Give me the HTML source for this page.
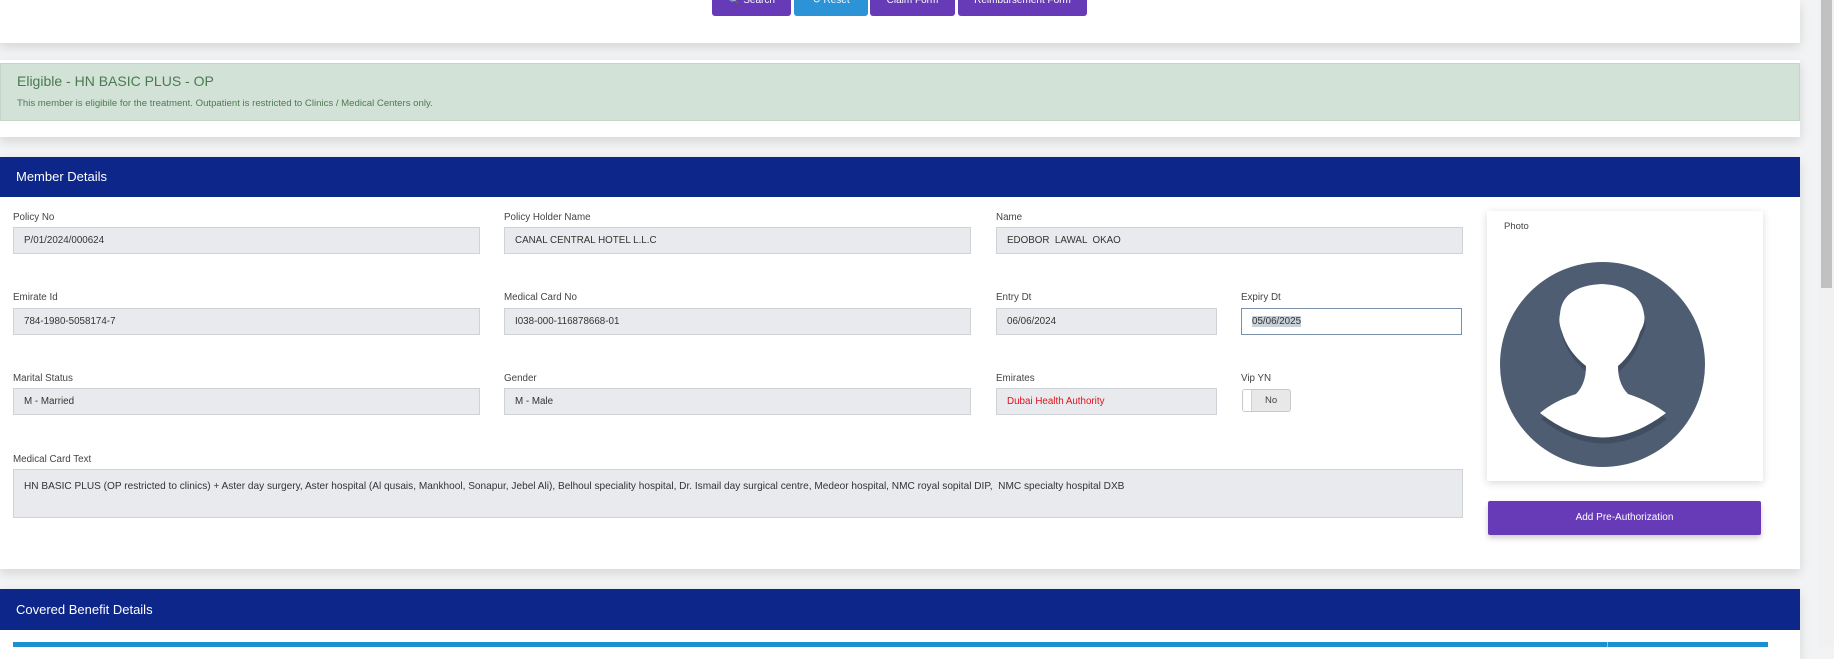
<!DOCTYPE html>
<html><head><meta charset="utf-8">
<style>
*{margin:0;padding:0;box-sizing:border-box}
body{width:1834px;height:647px;overflow:hidden;background:#f2f3f4;font-family:"Liberation Sans",Arial,sans-serif;position:relative}
.abs{position:absolute}
.panel{position:absolute;left:0;width:1800px;background:#fff;box-shadow:0 4px 10px rgba(0,0,0,.12)}
.btn{position:absolute;top:-6px;height:22px;border-radius:0 0 3px 3px;color:#fff;font-size:10px;text-align:center;line-height:14px}
.lbl{position:absolute;font-size:9.8px;color:#444}
.inp{position:absolute;height:27px;background:#e8eaed;border:1px solid #cfd3d8;font-size:9.8px;color:#333;padding-left:10px;line-height:25px}
.hdr{position:absolute;left:0;width:1800px;background:#0d2689;color:#fff;font-size:13px;padding-left:16px}
</style></head><body>
<div class="panel" style="top:0;height:43px"></div>
<div class="btn" style="left:712px;width:79px;background:#673ab7">&#128269; Search</div>
<div class="btn" style="left:794px;width:74px;background:#2b93d6">&#x21bb; Reset</div>
<div class="btn" style="left:870px;width:85px;background:#673ab7">Claim Form</div>
<div class="btn" style="left:958px;width:129px;background:#673ab7">Reimbursement Form</div>

<div class="panel" style="top:60px;height:77px"></div>
<div class="abs" style="left:0;top:63px;width:1800px;height:58px;background:#d3e2d7;border:1px solid #c4d6c8"></div>
<div class="abs" style="left:17px;top:73px;font-size:14px;color:#4a7a50">Eligible - HN BASIC PLUS - OP</div>
<div class="abs" style="left:17px;top:98px;font-size:9.6px;color:#4f7a55">This member is eligibile for the treatment. Outpatient is restricted to Clinics / Medical Centers only.</div>

<div class="panel" style="top:157px;height:412px"></div>
<div class="hdr" style="top:157px;height:40px;line-height:40px">Member Details</div>

<div class="lbl" style="left:13px;top:212px">Policy No</div>
<div class="inp" style="left:13px;top:227px;width:467px">P/01/2024/000624</div>
<div class="lbl" style="left:504px;top:212px">Policy Holder Name</div>
<div class="inp" style="left:504px;top:227px;width:467px">CANAL CENTRAL HOTEL L.L.C</div>
<div class="lbl" style="left:996px;top:212px">Name</div>
<div class="inp" style="left:996px;top:227px;width:467px">EDOBOR &nbsp;LAWAL &nbsp;OKAO</div>

<div class="lbl" style="left:13px;top:292px">Emirate Id</div>
<div class="inp" style="left:13px;top:308px;width:467px">784-1980-5058174-7</div>
<div class="lbl" style="left:504px;top:292px">Medical Card No</div>
<div class="inp" style="left:504px;top:308px;width:467px">I038-000-116878668-01</div>
<div class="lbl" style="left:996px;top:292px">Entry Dt</div>
<div class="inp" style="left:996px;top:308px;width:221px">06/06/2024</div>
<div class="lbl" style="left:1241px;top:292px">Expiry Dt</div>
<div class="inp" style="left:1241px;top:308px;width:221px;background:#fff;border-color:#7a8fa8"><span style="background:#c8d0d8">05/06/2025</span></div>

<div class="lbl" style="left:13px;top:373px">Marital Status</div>
<div class="inp" style="left:13px;top:388px;width:467px">M - Married</div>
<div class="lbl" style="left:504px;top:373px">Gender</div>
<div class="inp" style="left:504px;top:388px;width:467px">M - Male</div>
<div class="lbl" style="left:996px;top:373px">Emirates</div>
<div class="inp" style="left:996px;top:388px;width:221px;color:#e0101a">Dubai Health Authority</div>
<div class="lbl" style="left:1241px;top:373px">Vip YN</div>
<div class="abs" style="left:1242px;top:389px;width:49px;height:23px;border:1px solid #c9c9c9;border-radius:3px;background:#e8e8e8;overflow:hidden"><div style="width:9px;height:100%;background:#fff;border-right:1px solid #d0d0d0"></div><div class="abs" style="left:22px;top:5px;font-size:9.5px;color:#444">No</div></div>

<div class="lbl" style="left:13px;top:454px">Medical Card Text</div>
<div class="inp" style="left:13px;top:469px;width:1450px;height:49px;line-height:14px;padding-top:10px;font-size:10.1px">HN BASIC PLUS (OP restricted to clinics) + Aster day surgery, Aster hospital (Al qusais, Mankhool, Sonapur, Jebel Ali), Belhoul speciality hospital, Dr. Ismail day surgical centre, Medeor hospital, NMC royal sopital DIP, &nbsp;NMC specialty hospital DXB</div>

<div class="abs" style="left:1487px;top:211px;width:276px;height:270px;background:#fff;box-shadow:0 2px 8px rgba(0,0,0,.15)"></div>
<div class="abs" style="left:1504px;top:221px;font-size:9.5px;color:#444">Photo</div>
<svg class="abs" style="left:1500px;top:262px" width="205" height="205" viewBox="0 0 205 205">
<circle cx="102.5" cy="102.5" r="102.5" fill="#4f5d72"/>
<path d="M40 151 Q102 200 166 151 Q150 139 128 132 Q118 122 118 104 Q134 90 140 70 Q146 60 144 52 Q140 24 102 22 Q62 24 60 52 Q58 60 62 70 Q68 90 86 104 Q86 122 76 132 Q54 139 40 151Z" fill="#414d61" transform="translate(1,6)"/>
<path d="M40 151 Q102 200 166 151 Q150 139 128 132 Q118 122 118 104 Q134 90 140 70 Q146 60 144 52 Q140 24 102 22 Q62 24 60 52 Q58 60 62 70 Q68 90 86 104 Q86 122 76 132 Q54 139 40 151Z" fill="#fff"/>
</svg>
<div class="abs" style="left:1488px;top:501px;width:273px;height:34px;background:#673ab7;border-radius:2px;color:#fff;font-size:10px;text-align:center;line-height:34px;box-shadow:0 3px 6px rgba(0,0,0,.2)">Add Pre-Authorization</div>

<div class="panel" style="top:589px;height:70px"></div>
<div class="hdr" style="top:589px;height:41px;line-height:41px">Covered Benefit Details</div>
<div class="abs" style="left:13px;top:642px;width:1755px;height:5px;background:#1b8fd2"></div>
<div class="abs" style="left:1607px;top:642px;width:1px;height:5px;background:#8cc"></div>

<div class="abs" style="left:1819px;top:0;width:15px;height:647px;background:#f1f1f1"></div>
<div class="abs" style="left:1821px;top:0;width:11px;height:288px;background:#c1c1c1"></div>
</body></html>
